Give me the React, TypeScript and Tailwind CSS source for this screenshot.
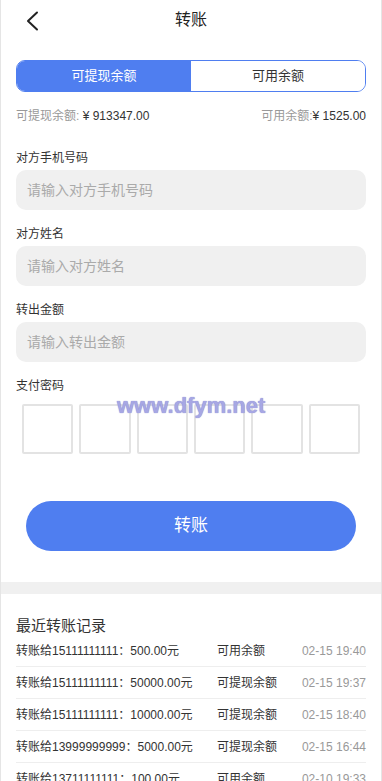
import React, { useState } from 'react';

const records = [
    { to: '15111111111', amount: '500.00', source: '可用余额', time: '02-15 19:40' },
    { to: '15111111111', amount: '50000.00', source: '可提现余额', time: '02-15 19:37' },
    { to: '15111111111', amount: '10000.00', source: '可提现余额', time: '02-15 18:40' },
    { to: '13999999999', amount: '5000.00', source: '可提现余额', time: '02-15 16:44' },
    { to: '13711111111', amount: '100.00', source: '可用余额', time: '02-10 19:33' },
    { to: '13711111111', amount: '200.00', source: '可用余额', time: '02-10 19:30' },
];

const Field = ({ label, placeholder }: { label: string; placeholder: string }) => (
    <div className="flex flex-col">
        <p className="text-[12px] leading-[18px] text-[#333]">{label}</p>
        <input
            placeholder={placeholder}
            className="mt-[3px] w-full h-[40px] rounded-[10px] bg-[#f0f0f0] px-[11px] text-[14px] text-[#333] placeholder:text-[#aaa] outline-none"
        />
    </div>
);

export default function App() {
    const [tab, setTab] = useState<'cash' | 'usable'>('cash');

    return (
        <div className="relative w-[382px] min-h-[781px] bg-white border-x border-[#e5e5e5] font-['Liberation_Sans','Noto_Sans_CJK_SC',sans-serif] text-[#333]">
            {/* header */}
            <div className="relative h-[40px] flex items-center justify-center">
                <button type="button" className="absolute left-[22px] top-[9px] p-[2px]">
                    <svg className="w-[16px] h-[20px]" viewBox="0 0 16 20" fill="none" stroke="#222" strokeWidth="2" strokeLinecap="round" strokeLinejoin="round">
                        <polyline points="12,1.5 3,10 12,18.5" />
                    </svg>
                </button>
                <h1 className="text-[16px] text-[#222]">转账</h1>
            </div>

            <div className="px-[15px] pt-[20px] flex flex-col">
                {/* tabs */}
                <div className="flex h-[32px] rounded-[9px] border border-[#4f7ef0] overflow-hidden text-[13px]">
                    <button
                        type="button"
                        onClick={() => setTab('cash')}
                        className={`flex-1 ${tab === 'cash' ? 'bg-[#4f7ef0] text-white' : 'bg-white text-[#333]'}`}
                    >
                        可提现余额
                    </button>
                    <button
                        type="button"
                        onClick={() => setTab('usable')}
                        className={`flex-1 ${tab === 'usable' ? 'bg-[#4f7ef0] text-white' : 'bg-white text-[#333]'}`}
                    >
                        可用余额
                    </button>
                </div>

                {/* balances */}
                <div className="mt-[16px] flex justify-between text-[12px] leading-[16px]">
                    <p><span className="text-[#999]">可提现余额: </span>¥ 913347.00</p>
                    <p><span className="text-[#999]">可用余额:</span>¥ 1525.00</p>
                </div>

                <div className="mt-[25px] flex flex-col gap-[15px]">
                    <Field label="对方手机号码" placeholder="请输入对方手机号码" />
                    <Field label="对方姓名" placeholder="请输入对方姓名" />
                    <Field label="转出金额" placeholder="请输入转出金额" />
                </div>

                {/* pay password */}
                <div className="mt-[15px] flex flex-col">
                    <p className="text-[12px] leading-[18px] text-[#333]">支付密码</p>
                    <div className="mt-[9px] px-[6px] grid grid-cols-6 gap-[6px]">
                        {Array.from({ length: 6 }).map((_, i) => (
                            <div key={i} className="h-[50px] rounded-[2px] border-2 border-[#e3e3e3]" />
                        ))}
                    </div>
                </div>

                <button
                    type="button"
                    className="mt-[47px] mx-[10px] h-[50px] rounded-full bg-[#4f7ef0] text-white text-[17px]"
                >
                    转账
                </button>
            </div>

            <div className="mt-[31px] h-[12px] bg-[#f0f0f0]" />

            {/* records */}
            <div className="px-[15px] pt-[23px]">
                <h2 className="text-[15px] leading-[18px] text-[#333]">最近转账记录</h2>
                <ul>
                    {records.map((r, i) => (
                        <li key={i} className="flex items-center h-[32px] border-b border-[#eee] text-[12px]">
                            <span className="w-[201px] text-[#333]">转账给{r.to}：{r.amount}元</span>
                            <span className="flex-1 text-[#333]">{r.source}</span>
                            <span className="text-[#999]">{r.time}</span>
                        </li>
                    ))}
                </ul>
            </div>

            {/* watermark */}
            <div className="absolute left-[116px] top-[389px] text-[22px] font-bold text-[#a7a7e4] [text-shadow:0_0_1px_#7676c0] pointer-events-none font-['Liberation_Sans',sans-serif]">
                www.dfym.net
            </div>
        </div>
    );
}
